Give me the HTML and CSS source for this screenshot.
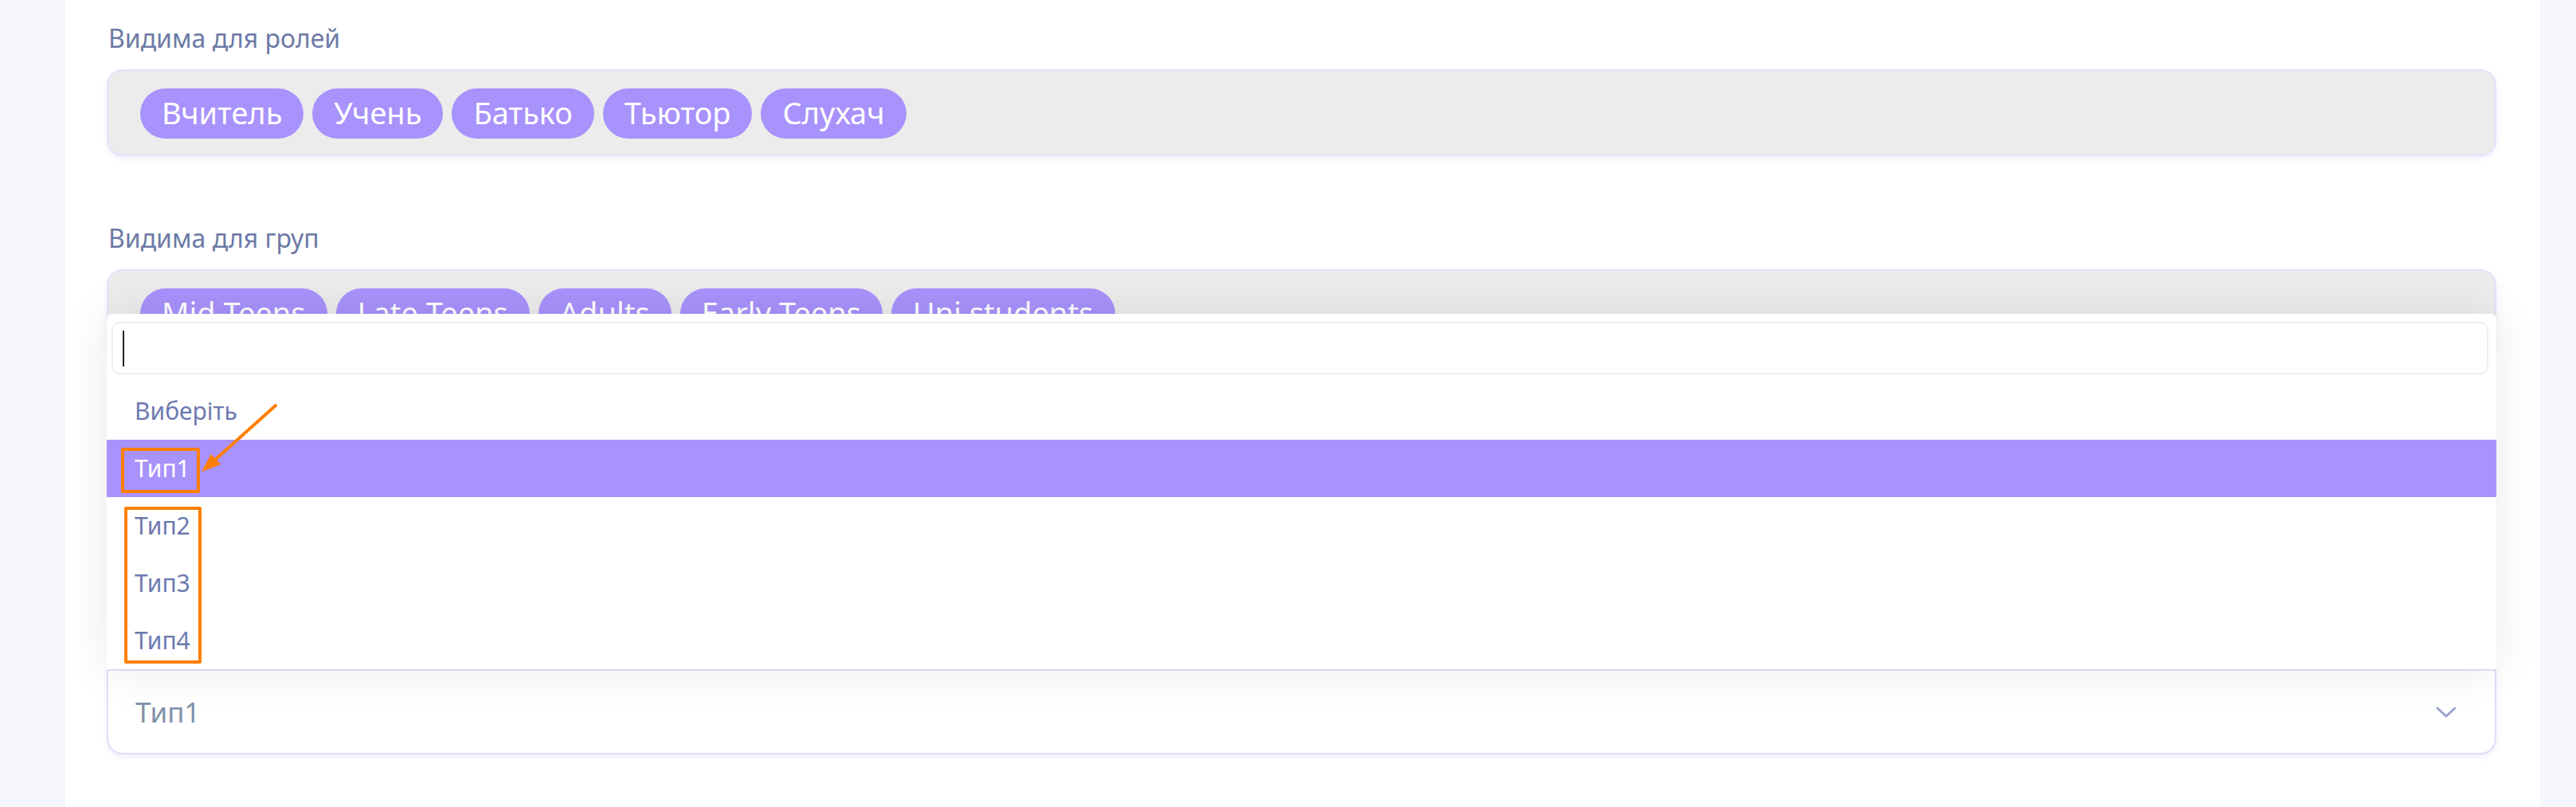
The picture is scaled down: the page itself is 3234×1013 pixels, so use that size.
FILE: index.html
```html
<!DOCTYPE html>
<html lang="uk">
<head>
    <meta charset="UTF-8">
    <meta name="viewport" content="width=device-width, initial-scale=1.0">
    <title>Налаштування видимості</title>
    <link rel="stylesheet" href="styles.css">
</head>
<body>

<div class="page">
    <div class="side"></div>

    <div class="panel">
        <div class="field">
            <label class="field-label">Видима для ролей</label>
            <div class="tags">
                <span class="tag">Вчитель</span>
                <span class="tag">Учень</span>
                <span class="tag">Батько</span>
                <span class="tag">Тьютор</span>
                <span class="tag">Слухач</span>
            </div>
        </div>

        <div class="field">
            <label class="field-label">Видима для груп</label>
            <div class="tags">
                <span class="tag">Mid Teens</span>
                <span class="tag">Late Teens</span>
                <span class="tag">Adults</span>
                <span class="tag">Early Teens</span>
                <span class="tag">Uni students</span>
            </div>
        </div>

        <div class="field field-type">
            <label class="field-label">Тип</label>
            <div class="select-wrap">
                <!-- відкритий список (відкривається вгору) -->
                <div class="dropdown">
                    <div class="search"><span class="caret"></span></div>
                    <ul class="options">
                        <li class="placeholder">Виберіть</li>
                        <li class="active">Тип1</li>
                        <li>Тип2</li>
                        <li>Тип3</li>
                        <li>Тип4</li>
                    </ul>

                    <!-- позначки на скріншоті -->
                    <span class="mark mark-one"></span>
                    <span class="mark mark-rest"></span>
                    <svg class="arrow" width="240" height="220" viewBox="0 0 240 220">
                        <line x1="212" y1="115" x2="135" y2="184" stroke="#ff7f00" stroke-width="4" stroke-linecap="round"/>
                        <polygon points="119,198 131,176 143,189" fill="#ff7f00"/>
                    </svg>
                </div>

                <div class="select">
                    <span class="select-value">Тип1</span>
                    <svg class="chevron" width="26" height="14" viewBox="0 0 26 14">
                        <polyline points="2,2 13,12 24,2" fill="none" stroke="#9aa3cf" stroke-width="3" stroke-linecap="round" stroke-linejoin="round"/>
                    </svg>
                </div>
            </div>
        </div>
    </div>

    <div class="side side-right"></div>
</div>

</body>
</html>
```

FILE: styles.css
```css
body { margin: 0; background: #f6f5fb; font-family: "Noto Sans", "Open Sans", sans-serif; }
.page { display: flex; min-height: 1013px; }
.side { width: 82px; flex-shrink: 0; }
.side-right { width: 45px; }
.panel { flex: 1; background: #fff; padding: 28px 55px 0 52px; }

.field { margin-bottom: 83px; }
.field-label { display: block; color: #6d7aa6; font-size: 32px; line-height: 40px; margin-bottom: 19px; padding-left: 2px; }

.tags { display: flex; gap: 11px; padding: 22px 40px 20px; background: #ececec; border: 2px solid #e6e2fa; border-radius: 20px; box-shadow: 0 3px 6px rgba(200, 190, 250, 0.25); }
.tag { height: 63px; line-height: 60px; padding: 0 27px; background: #a892fc; color: #fff; border-radius: 32px; font-size: 38px; }

.field-type { margin-top: 334px; }
.select-wrap { position: relative; }
.select { display: flex; align-items: center; justify-content: space-between; height: 103px; padding: 0 48px 0 34px; border: 2px solid #e3defa; border-radius: 0 0 20px 20px; background: #fff; box-shadow: 0 3px 6px rgba(200, 190, 250, 0.25); }
.select-value { color: #8190aa; font-size: 35px; }

.dropdown { position: absolute; left: 0; right: 0; bottom: 100%; background: #fff; border-radius: 6px 6px 0 0; padding-top: 10px; box-shadow: 0 0 60px rgba(0, 0, 0, 0.09); z-index: 2; }
.search { height: 62px; margin: 0 10px 0 6px; border: 2px solid #efefef; border-radius: 10px; display: flex; align-items: center; padding-left: 12px; }
.caret { width: 2px; height: 45px; background: #222; }
.options { list-style: none; margin: 10px 0 0; padding: 0; }
.options li { height: 72px; line-height: 72px; padding-left: 35px; color: #6d7ab0; font-size: 30px; }
.options li.active { background: #a892fc; color: #fff; }

.mark { position: absolute; box-sizing: border-box; border: 4px solid #ff7f00; border-radius: 2px; }
.mark-one { left: 18px; top: 168px; width: 99px; height: 57px; }
.mark-rest { left: 22px; top: 242px; width: 97px; height: 197px; }
.arrow { position: absolute; left: 0; top: 0; }
```
